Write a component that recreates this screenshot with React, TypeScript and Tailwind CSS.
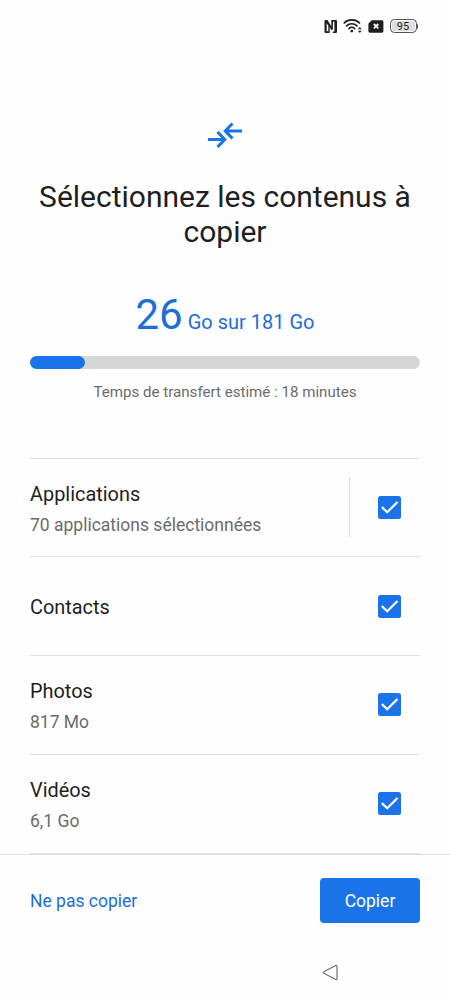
import React from 'react'

interface Category {
  label: string
  detail?: string
  expandable?: boolean
}

const categories: Category[] = [
  {
    label: 'Applications',
    detail: '70 applications sélectionnées',
    expandable: true
  },
  { label: 'Contacts' },
  { label: 'Photos', detail: '817 Mo' },
  { label: 'Vidéos', detail: '6,1 Go' }
]

const StatusBar: React.FC = () => (
  <div className="flex h-[52px] shrink-0 items-center justify-end pr-[32px] text-[#1f1f1f]">
    <svg width="13" height="13" viewBox="0 0 13 13" className="mr-[6px]">
      <g fill="currentColor">
        <path d="M.5 1q0-1 1-1h2L8 7.500v3L2.700 3.500v7.700h2V13H1.500q-1 0-1-1z" />
        <path d="M4.300 5.600l1.400 1.900V13H4.300z" />
        <path d="M7.300 0H12q1 0 1 1v11q0 1-1 1H8.700v-1.600h1.700V1.700H8.900v8.600L7.300 8z" />
      </g>
    </svg>

    <svg width="20" height="16" viewBox="0 0 20 16" className="mr-[5px]">
      <g
        fill="none"
        stroke="currentColor"
        strokeWidth="1.7"
        strokeLinecap="round"
      >
        <path d="M1.2 5c4-4.1 11.2-4.1 15.2 0" />
        <path d="M3.6 7.9c2.9-2.9 7.5-2.9 10.4 0" />
        <path d="M6 10.6c1.6-1.6 4-1.6 5.6 0" />
      </g>
      <circle cx="8.8" cy="13.1" r="1.4" fill="currentColor" />
      <path
        d="M14.9 11.2l1.9-2.1 1.9 2.1zM14.9 12.8l1.9 2.1 1.9-2.1z"
        fill="currentColor"
      />
    </svg>

    <svg width="16" height="13" viewBox="0 0 16 13" className="mr-[6px]">
      <path
        d="M3.7.3H14a1.4 1.4 0 011.4 1.4v9.6a1.4 1.4 0 01-1.4 1.4H1.8A1.4 1.4 0 01.4 11.3V3.4z"
        fill="currentColor"
      />
      <path
        d="M5.9 4l4.4 4.4m0-4.4L5.9 8.4"
        stroke="#fff"
        strokeWidth="1.8"
      />
    </svg>

    <div className="flex items-center">
      <div className="flex h-[14px] w-[27px] items-center justify-center rounded-[4.5px] border border-[#555] bg-[#dedede] pt-px text-[11px] leading-none shadow-[inset_0_0_0_1px_#fff]">
        95
      </div>
      <div className="h-[5px] w-[1.5px] rounded-r bg-[#555]" />
    </div>
  </div>
)

const Checkbox: React.FC = () => (
  <span
    role="checkbox"
    aria-checked="true"
    className="flex size-[23px] items-center justify-center rounded-[2.5px] bg-[#1a73e8]"
  >
    <svg width="23" height="23" viewBox="0 0 23 23">
      <path
        d="M3.9 11.1l5.3 5.2L19.5 5.9"
        fill="none"
        stroke="#fff"
        strokeWidth="2.2"
      />
    </svg>
  </span>
)

const CategoryRow: React.FC<{ category: Category }> = ({ category }) => (
  <li className="flex h-[98.75px] items-center border-t-[1.5px] border-[#e0e0e0]">
    <div className="flex flex-1 flex-col gap-[4.6px] pt-[3.6px]">
      <span className="text-[19.9px] leading-[26px] text-[#1f1f1f]">
        {category.label}
      </span>
      {category.detail && (
        <span className="text-[17.5px] leading-6 text-[#6b6b6b]">
          {category.detail}
        </span>
      )}
    </div>

    {category.expandable && <div className="h-[60px] w-px bg-[#dadada]" />}

    <div className="flex w-[70px] justify-end pr-[18.6px]">
      <Checkbox />
    </div>
  </li>
)

export default function App() {
  return (
    <div className="flex h-[1000px] w-[450px] flex-col overflow-hidden bg-[#fefefe] font-['Roboto',sans-serif]">
      <StatusBar />

      <header className="flex h-[405.6px] shrink-0 flex-col items-center px-[30px] pt-[70px]">
        <svg
          width="36"
          height="26"
          viewBox="0 0 36 26"
          fill="none"
          stroke="#1a73e8"
          strokeWidth="3"
        >
          <path d="M1 17.5h16M10.5 10l7.3 7.5-7.3 7.5" />
          <path d="M35 9H19M25.5 1.5L18.2 9l7.3 7.5" />
        </svg>

        <h1 className="mt-[30.6px] text-center text-[30px] leading-[35.3px] text-[#1f1f1f]">
          Sélectionnez les contenus à copier
        </h1>

        <p className="mt-[40.8px] h-[50px] text-[20px] leading-[50px] text-[#1a6fd8]">
          <span className="text-[42px]">26</span> Go sur 181 Go
        </p>

        <div className="mt-[16px] h-[13px] w-full shrink-0 rounded-full bg-[#d6d6d6]">
          <div className="h-full w-[55px] rounded-full bg-[#1a73e8]" />
        </div>

        <p className="mt-[11px] text-[15.1px] leading-6 text-[#6b6b6b]">
          Temps de transfert estimé : 18 minutes
        </p>
      </header>

      <ul className="h-[396.4px] shrink-0 overflow-hidden px-[30px]">
        {categories.map(category => (
          <CategoryRow key={category.label} category={category} />
        ))}
        <li className="border-t-[1.5px] border-[#e0e0e0]" />
      </ul>

      <footer className="flex h-[92px] shrink-0 items-center justify-between border-t border-[#dedede] px-[30px]">
        <button type="button" className="pt-[2px] text-[17.5px] text-[#1a6fd8]">
          Ne pas copier
        </button>
        <button
          type="button"
          className="h-[45px] w-[100px] rounded-[4px] bg-[#1a73e8] pt-[2px] text-[17.5px] text-white"
        >
          Copier
        </button>
      </footer>

      <nav className="flex h-[53px] shrink-0 items-center pl-[322px]">
        <svg width="17" height="17" viewBox="0 0 17 17">
          <path
            d="M2 7.7L13.6 1.5q1.4-.5 1.4 1v12q0 1.5-1.4 1L2 9.3q-1.4-.8 0-1.6z"
            fill="none"
            stroke="#707070"
            strokeWidth="1.2"
          />
        </svg>
      </nav>
    </div>
  )
}
